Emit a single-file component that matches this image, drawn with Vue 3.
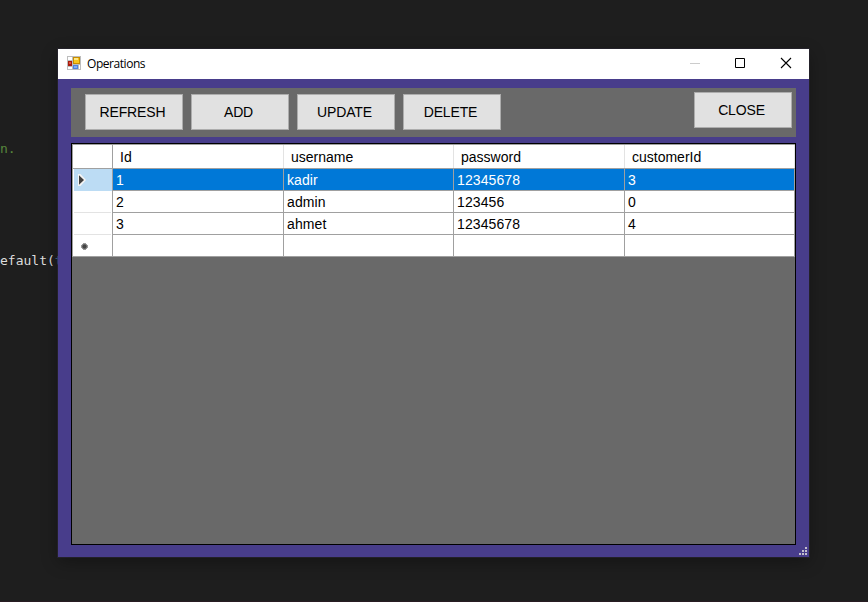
<script setup>
const actions = ['REFRESH', 'ADD', 'UPDATE', 'DELETE']
const columns = ['Id', 'username', 'password', 'customerId']
const rows = [
  ['1', 'kadir', '12345678', '3'],
  ['2', 'admin', '123456', '0'],
  ['3', 'ahmet', '12345678', '4'],
  ['', '', '', ''],
]
</script>

<template>
  <main class="desktop">
    <span class="code comment">n.</span>
    <span class="code call">efault(<i>t</i></span>
    <section class="window">
      <header class="titlebar">
        <svg class="app-icon" width="14" height="14" viewBox="0 0 14 14" shape-rendering="crispEdges">
          <path fill="#bdbdbd" d="M0 0h14v14H0z" />
          <path fill="#fff" d="M1 1h4v3H1zM1 11h4v2H1zM12 9h1v4h-1z" />
          <path fill="#a81c0c" d="M1 5h4v5H1z" />
          <path fill="#e0503c" d="M2 6h2v2H2z" />
          <path fill="#c98d00" d="M6 1h7v7H6z" />
          <path fill="#f7c61c" d="M7 2h5v5H7z" />
          <path fill="#ffe784" d="M7 2h4v2H7z" />
          <path fill="#4f82dc" d="M6 9h5v4H6z" />
          <path fill="#80aff4" d="M7 10h3v2H7z" />
        </svg>
        <h1>Operations</h1>
        <div class="controls">
          <svg width="46" height="30" viewBox="0 0 46 30"><path d="M19 14.5h10" stroke="#ccc" /></svg>
          <svg width="46" height="30" viewBox="0 0 46 30"><path d="M18.5 9.5h9v9h-9z" fill="none" stroke="#000" /></svg>
          <svg width="46" height="30" viewBox="0 0 46 30"><path d="M18 9l10 10M28 9l-10 10" stroke="#000" stroke-width="1.1" /></svg>
        </div>
      </header>
      <div class="client">
        <nav class="toolbar">
          <button v-for="a in actions" :key="a">{{ a }}</button>
          <button class="close">CLOSE</button>
        </nav>
        <div class="grid">
          <div class="row head">
            <div class="marker"></div>
            <div v-for="c in columns" :key="c" class="cell">{{ c }}</div>
          </div>
          <div v-for="(r, i) in rows" :key="i" class="row" :class="{ selected: i === 0 }">
            <div class="marker">
              <svg v-if="i === 0" width="8" height="12" viewBox="0 0 8 12"><path d="M0 0h2.5L8 6l-5.5 6H0z" fill="#f4f4f4" /><path d="M1 1.2v9.6L6 6z" fill="#404040" /></svg>
              <svg v-if="i === 3" class="star" width="7" height="7" viewBox="0 0 7 7"><path fill="#9a9a9a" d="M2 0h3v1h1v1h1v3H6v1H5v1H2V6H1V5H0V2h1V1h1z" /><circle cx="3.5" cy="3.5" r="2.2" fill="#444" /></svg>
            </div>
            <div v-for="(v, j) in r" :key="j" class="cell">{{ v }}</div>
          </div>
        </div>
      </div>
      <svg class="grip" width="8" height="8" viewBox="0 0 8 8" shape-rendering="crispEdges">
        <path fill="#c4c0cc" d="M6 0h2v2H6zM3 3h2v2H3zM6 3h2v2H6zM0 6h2v2H0zM3 6h2v2H3zM6 6h2v2H6z" />
      </svg>
    </section>
  </main>
</template>

<style>
body { background: #1e1e1e; overflow: hidden; }
</style>

<style scoped>
* { box-sizing: border-box; }
.desktop {
  position: relative;
  width: 868px;
  height: 602px;
  padding: 49px 59px 44px 58px;
  border-bottom: 1px solid #281c22;
  background: #1e1e1e;
  overflow: hidden;
  font: 14px "Liberation Sans", Arial, sans-serif;
  color: #000;
}
.code { position: absolute; left: 0; font: 13px/16px "DejaVu Sans Mono", monospace; }
.comment { top: 141px; color: #57863c; }
.call { top: 253px; color: #dcdcdc; }
.call i { font-style: normal; color: #4478a5; }
.window {
  position: relative;
  display: flex;
  flex-direction: column;
  width: 751px;
  height: 508px;
  background: #483d8b;
  box-shadow: 0 0 0 1px rgba(45, 42, 58, .5), 0 5px 16px rgba(0, 0, 0, .32);
}
.titlebar { display: flex; height: 30px; background: #fff; padding-left: 9px; }
.app-icon { margin-top: 7px; }
h1 { margin: 0 0 0 6px; font: 12px/30px "Open Sans", "Noto Sans", sans-serif; letter-spacing: -.45px; }
.controls { display: flex; margin-left: auto; }
.client { display: flex; flex-direction: column; flex: 1; gap: 6px; padding: 9px 13px 12px; }
.toolbar { display: flex; gap: 8px; height: 49px; padding: 6px 4px 0 14px; background: #696969; }
button {
  width: 98px;
  height: 36px;
  padding: 0 3px 0 0;
  border: 1px solid #adadad;
  background: #e1e1e1;
  font: inherit;
  letter-spacing: -.15px;
  color: #000;
}
.close { margin: -2px 0 0 auto; }
.grid { flex: 1; border: 1px solid #000; background: #696969; }
.row {
  display: grid;
  grid-template-columns: 41px 171px 170px 171px 170px;
  grid-template-rows: minmax(0, 1fr);
  height: 22px;
  background: #fff;
  line-height: 23px;
}
.cell { min-height: 0; border-right: 1px solid #a0a0a0; border-bottom: 1px solid #a0a0a0; padding-left: 3px; white-space: pre; letter-spacing: .1px; }
.marker { position: relative; border-left: 1px solid #a0a0a0; border-right: 1px solid #a0a0a0; padding-left: 5px; display: flex; align-items: center; }
.marker::after { content: ""; position: absolute; left: 1px; right: 1px; bottom: 0; height: 1px; background: #e3e3e3; }
.head { height: 25px; border-top: 1px solid #a0a0a0; line-height: 24px; }
.head .cell { padding-left: 7px; border-right: 0; box-shadow: inset -1px 0 #e3e3e3; letter-spacing: 0; }
.head .marker, .row:last-child .marker { border-bottom: 1px solid #a0a0a0; }
.head .marker::after, .row:last-child .marker::after, .selected .marker::after { display: none; }
.selected .cell { background: #0078d7; color: #fff; }
.selected .marker { background: linear-gradient(#bcdcf4, #bcdcf4) 1px 0 / 100% 100% no-repeat; }
.star { margin: 2px 0 0 3px; }
.grip { position: absolute; right: 2px; bottom: 2px; }
</style>
